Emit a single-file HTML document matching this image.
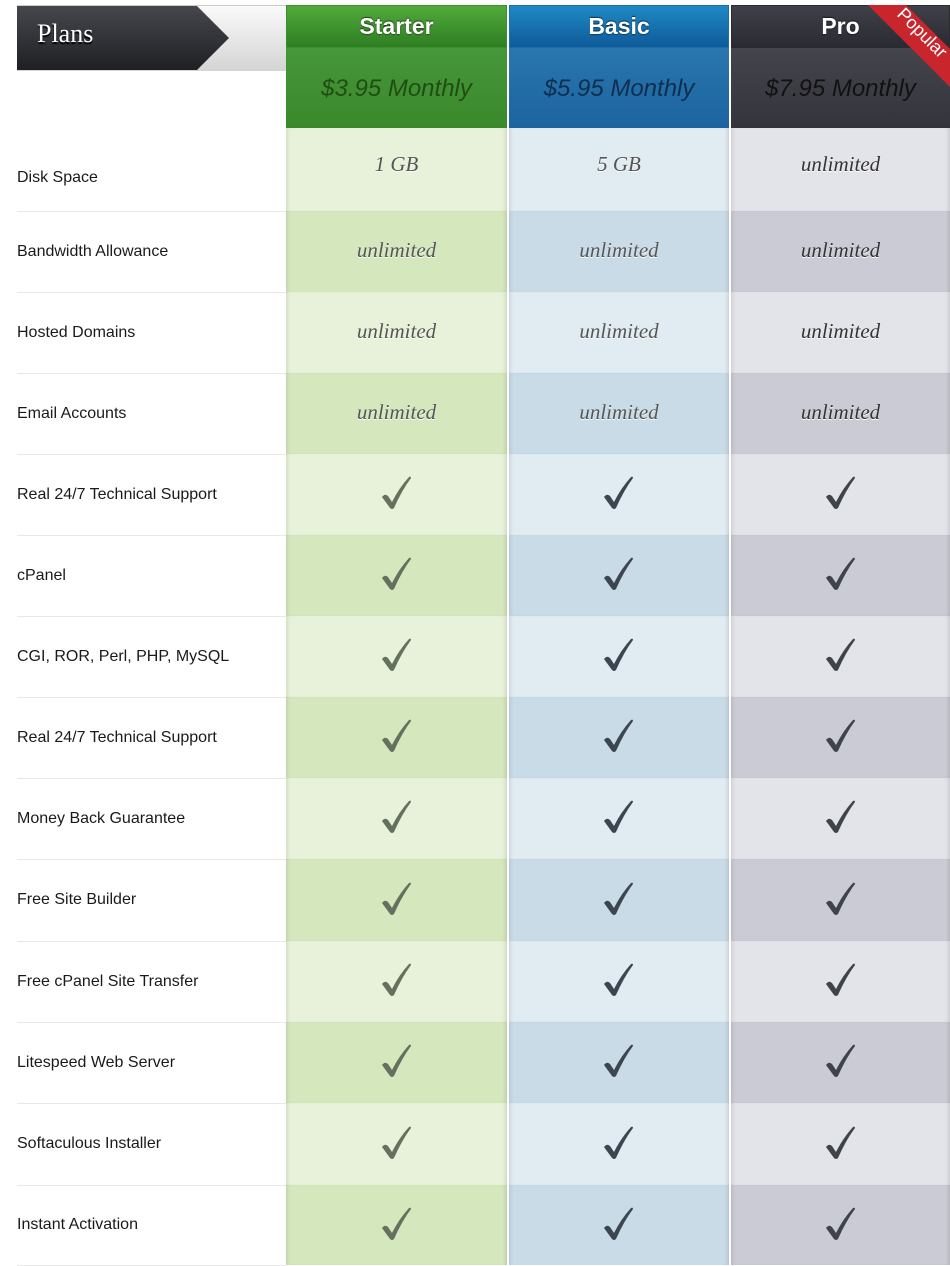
<!DOCTYPE html>
<html><head><meta charset="utf-8"><style>
*{margin:0;padding:0;box-sizing:border-box}
body{width:950px;height:1265px;background:#fff;position:relative;overflow:hidden;font-family:"Liberation Sans",Arial,sans-serif}
.a{position:absolute}
.lbl{position:absolute;left:17px;font-size:16px;color:#1a1a1a;}
.sep{position:absolute;left:17px;width:269px;height:1px;background:#e8e8e8}
.cell{position:absolute;display:flex;align-items:center;justify-content:center}
.val{font-family:"Liberation Serif",serif;font-style:italic;font-size:21px;color:#555;text-shadow:0 1px 0 #fff}
.hd{position:absolute;top:5px;height:43px;color:#fff;font-weight:bold;font-size:23px;display:flex;align-items:center;justify-content:center;text-shadow:0 -1px 1px rgba(0,0,0,.6),0 1px 1px rgba(0,0,0,.4)}
.pr{position:absolute;top:48px;height:80px;font-style:italic;font-size:24px;display:flex;align-items:center;justify-content:center;padding-top:2px}
</style></head><body>
<div class="a" style="left:17px;top:5px;width:269px;height:66px;background:linear-gradient(#fafafa,#d4d4d4);border-top:1px solid #ccc"></div>
<svg class="a" style="left:17px;top:5px" width="215" height="66"><defs><linearGradient id="g" x1="0" y1="0" x2="0" y2="1"><stop offset="0" stop-color="#46474d"/><stop offset="1" stop-color="#1f2024"/></linearGradient></defs><polygon points="0,1 180,1 212,33 180,65 0,65" fill="url(#g)"/></svg>
<div class="a" style="left:37px;top:19px;font-family:'Liberation Serif',serif;font-size:26px;color:#fff;text-shadow:0 2px 1px #000">Plans</div>

<div class="hd" style="left:286px;width:221px;background:linear-gradient(#52ab3c,#2d7e22);border:1px solid #3c8f2c">Starter</div>
<div class="pr" style="left:286px;width:221px;background:linear-gradient(#46963a,#3a8a2c);color:#1f4d14">$3.95 Monthly</div>
<div class="hd" style="left:509px;width:220px;background:linear-gradient(#1e8ac4,#0f5a99);border:1px solid #1a6fa8">Basic</div>
<div class="pr" style="left:509px;width:220px;background:linear-gradient(#2a76ae,#1c64a0);color:#0e2e4f">$5.95 Monthly</div>
<div class="hd" style="left:731px;width:219px;background:linear-gradient(#404049,#2a2a32);border:1px solid #2a2a30">Pro</div>
<div class="pr" style="left:731px;width:219px;background:linear-gradient(#44444d,#34343c);color:#111">$7.95 Monthly</div>
<svg class="a" style="left:860px;top:5px" width="90" height="90"><polygon points="8,0 46,0 90,44 90,82" fill="#c8262c"/><text x="0" y="0" transform="translate(58,32) rotate(45)" text-anchor="middle" font-family="Liberation Sans" font-size="18" fill="#fff">Popular</text></svg>

<div id="rows"></div>
<script>
var rows=[["Disk Space","1 GB","5 GB","unlimited"],["Bandwidth Allowance","unlimited","unlimited","unlimited"],["Hosted Domains","unlimited","unlimited","unlimited"],["Email Accounts","unlimited","unlimited","unlimited"],["Real 24/7 Technical Support"],["cPanel"],["CGI, ROR, Perl, PHP, MySQL"],["Real 24/7 Technical Support"],["Money Back Guarantee"],["Free Site Builder"],["Free cPanel Site Transfer"],["Litespeed Web Server"],["Softaculous Installer"],["Instant Activation"]];
var tops=[128,211,292,373,454,535,616,697,778,859,941,1022,1103,1185,1265];
var cols=[[286,221,"#e8f2da","#d5e7bd","#65705e"],[509,220,"#e1ebf2","#c8dbe7","#3d4650"],[731,219,"#e3e3ea","#cbcbd5","#3f434a"]];
var chk=function(c){return '<svg width="30" height="34" viewBox="0 0 30 34"><path d="M0 21 Q3 17 6 20 L10 26 Q17 12 27 1 Q29 0 29 2 Q20 14 12 32 Q10 34 8 32 Z" fill="'+c+'"/></svg>'};
var h="";
for(var i=0;i<rows.length;i++){var t=tops[i],b=tops[i+1],ht=b-t,r=rows[i];
 h+='<div class="lbl" style="top:'+t+'px;height:'+ht+'px;display:flex;align-items:center;'+(i==0?'padding-top:17px':'')+'">'+r[0]+'</div>';
 h+='<div class="sep" style="top:'+b+'px"></div>';
 for(var j=0;j<3;j++){var c=cols[j];var bg=i%2==0?c[2]:c[3];
  var inner=r[1]?'<span class="val" style="color:'+(j==2?'#333':'#555')+'">'+r[j+1]+'</span>':chk(c[4]);
  h+='<div class="cell" style="left:'+c[0]+'px;width:'+c[1]+'px;top:'+t+'px;height:'+ht+'px;background:'+bg+';box-shadow:inset 4px 0 4px -3px rgba(0,0,0,.12),inset -4px 0 4px -3px rgba(0,0,0,.15);padding-bottom:'+(i==0?10:3)+'px">'+inner+'</div>';}
}
document.getElementById("rows").innerHTML=h;
</script>
</body></html>
